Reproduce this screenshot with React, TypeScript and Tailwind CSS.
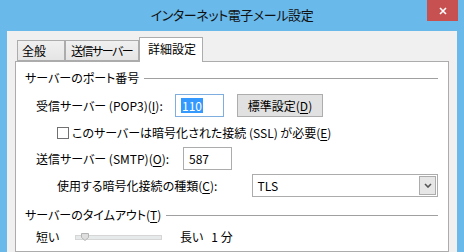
import type { ReactNode } from "react";

const FONT = "font-['Noto_Sans_CJK_JP',sans-serif] [font-feature-settings:'palt']";

function Key({ k }: { k: string }) {
  return <span className="underline underline-offset-[2px]">{k}</span>;
}

function GroupHeader({ children }: { children: ReactNode }) {
  return (
    <div className="flex h-[16px] items-center">
      <span className="whitespace-nowrap leading-[16px]">{children}</span>
      <div className="ml-[5px] h-px flex-1 bg-[#a0a0a0]" />
    </div>
  );
}

function Tab({
  label,
  active,
  cls,
}: {
  label: string;
  active?: boolean;
  cls: string;
}) {
  if (active) {
    return (
      <div
        className={`${cls} h-[25px] whitespace-nowrap border border-b-0 border-[#acacac] bg-white pt-[3px] leading-[16px]`}
      >
        {label}
      </div>
    );
  }
  return (
    <div
      className={`${cls} mb-px h-[21px] overflow-hidden whitespace-nowrap border border-[#acacac] bg-gradient-to-b from-[#f0f0f0] to-[#e5e5e5] pt-[2px] leading-[16px]`}
    >
      {label}
    </div>
  );
}

export default function App() {
  return (
    <div
      className={`${FONT} flex h-[252px] w-[464px] flex-col overflow-hidden whitespace-nowrap bg-[#69b9eb] text-[12px] text-black`}
    >
      {/* title bar */}
      <div className="relative flex h-[31px] shrink-0 items-center justify-center">
        <span className="pb-[1px] text-[13px] tracking-[-0.4px] text-[#111]">
          インターネット電子メール設定
        </span>
        <div className="absolute right-[6px] top-0 flex h-[21px] w-[31px] items-center justify-center bg-[#c75050]">
          <svg width="8" height="8" viewBox="0 0 8 8">
            <path d="M1 1L7 7M7 1L1 7" stroke="#fff" strokeWidth="1.6" />
          </svg>
        </div>
      </div>

      {/* dialog body */}
      <div className="mx-[7px] flex flex-1 flex-col bg-[#f0f0f0] pl-[8px] pr-[8px] pt-[6px]">
        <div className="relative z-10 flex h-[25px] items-end pl-[2px]">
          <Tab label="全般" cls="w-[48px] pl-[4px]" />
          <Tab label="送信サーバー" cls="w-[74px] pl-[5px] tracking-[-1.5px]" />
          <Tab label="詳細設定" cls="w-[64px] pl-[8px]" active />
        </div>

        <div className="-mt-px flex flex-1 flex-col border border-[#acacac] bg-white pl-[9px] pr-[10px] pt-[8px]">
          <GroupHeader>サーバーのポート番号</GroupHeader>

          <div className="mt-[8px] flex h-[23px] items-center">
            <span className="ml-[11px] w-[139px]">
              受信サーバー (POP3)(<Key k="I" />):
            </span>
            <div className="flex h-[23px] w-[49px] items-center border border-[#7eaee0] pl-[5px]">
              <span className="bg-[#3399ff] px-[1px] leading-[15px] text-white">110</span>
            </div>
            <div className="ml-[13px] flex h-[23px] w-[86px] items-center justify-center border border-[#adadad] bg-[#e1e1e1]">
              標準設定(<Key k="D" />)
            </div>
          </div>

          <div className="mt-[8px] flex h-[16px] items-center">
            <div className="ml-[32px] h-[12px] w-[12px] border border-[#707070] bg-white" />
            <span className="ml-[3px] leading-[16px]">
              このサーバーは暗号化された接続 (SSL) が必要(<Key k="E" />)
            </span>
          </div>

          <div className="mt-[6px] flex h-[23px] items-center">
            <span className="ml-[11px] w-[147px]">
              送信サーバー (SMTP)(<Key k="O" />):
            </span>
            <div className="flex h-[23px] w-[49px] items-center border border-[#acacac] pl-[5px]">
              587
            </div>
          </div>

          <div className="mt-[4px] flex h-[23px] items-center">
            <span className="ml-[32px] w-[196px]">
              使用する暗号化接続の種類(<Key k="C" />):
            </span>
            <div className="flex h-[23px] w-[186px] items-center justify-between border border-[#acacac] pl-[4px] pr-px">
              <span>TLS</span>
              <div className="flex h-[19px] w-[17px] items-center justify-center border border-[#acacac] bg-[#e6e6e6]">
                <svg width="8" height="5" viewBox="0 0 8 5">
                  <path d="M1 1L4 4L7 1" fill="none" stroke="#555" strokeWidth="1.6" />
                </svg>
              </div>
            </div>
          </div>

          <div className="mt-[10px]">
            <GroupHeader>
              サーバーのタイムアウト(<Key k="T" />)
            </GroupHeader>
          </div>

          <div className="mt-[6px] flex h-[16px] items-center">
            <span className="ml-[11px] w-[39px]">短い</span>
            <div className="relative h-[5px] w-[87px] border border-[#d6d6d6] bg-[#e7eaea]">
              <svg
                className="absolute left-[5px] top-[-3px]"
                width="8"
                height="8"
                viewBox="0 0 8 8"
              >
                <path
                  d="M0.5 0.5H7.5V4.5L4 7.5L0.5 4.5Z"
                  fill="#dedede"
                  stroke="#b4b4b4"
                />
              </svg>
            </div>
            <span className="ml-[18px]">長い</span>
            <span className="ml-[8px]">1 分</span>
          </div>
        </div>
      </div>
    </div>
  );
}
